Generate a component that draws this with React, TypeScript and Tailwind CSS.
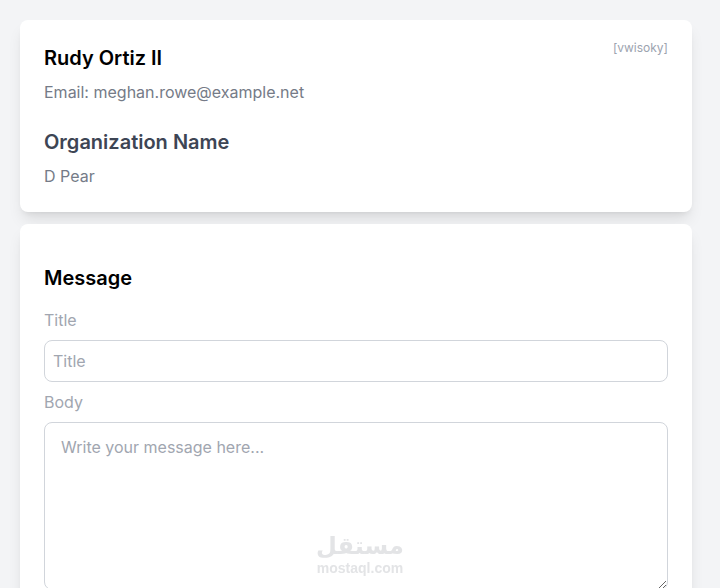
import React from 'react';

const ContactCard = () => {
  return (
    <section className="relative bg-white p-6 rounded-lg shadow-lg">
      <span className="absolute top-5 right-6 text-xs text-[#9ca3af]">[vwisoky]</span>
      <h2 className="text-xl font-semibold text-black mb-2">Rudy Ortiz II</h2>
      <p className="text-[#757b87] mb-6">Email: meghan.rowe@example.net</p>
      <h3 className="text-xl font-semibold text-[#3d4554] mb-2">Organization Name</h3>
      <p className="text-[#757b87]">D Pear</p>
    </section>
  );
};

const MessageForm = () => {
  return (
    <form className="relative bg-white px-6 pt-10 pb-6 rounded-lg shadow-lg">
      <h2 className="text-xl font-semibold text-black mb-4">Message</h2>
      <label htmlFor="title" className="block text-[#a1a6b0] mb-2">
        Title
      </label>
      <input
        id="title"
        type="text"
        placeholder="Title"
        className="block w-full p-2 mb-2 bg-white border border-[#d1d5db] rounded-lg placeholder:text-[#a1a6b0]"
      />
      <label htmlFor="body" className="block text-[#a1a6b0] mb-2">
        Body
      </label>
      <textarea
        id="body"
        placeholder="Write your message here..."
        className="block w-full h-42 px-4 py-3 bg-white border border-[#d1d5db] rounded-lg placeholder:text-[#a1a6b0]"
      />
    </form>
  );
};

const Watermark = () => {
  return (
    <div className="fixed inset-x-0 bottom-3 flex flex-col items-center font-bold text-[#e3e4e6] pointer-events-none">
      <span lang="ar" dir="rtl" className="font-['DejaVu_Sans',sans-serif] text-2xl leading-7">
        مستقل
      </span>
      <span className="font-['Liberation_Sans',sans-serif] text-sm leading-4">mostaql.com</span>
    </div>
  );
};

const App = () => {
  return (
    <main className="min-h-screen bg-[#f3f4f6] font-['Inter',sans-serif] text-base">
      <div className="flex flex-col gap-3 pt-5 pb-5 pl-5 pr-7">
        <ContactCard />
        <MessageForm />
      </div>
      <Watermark />
    </main>
  );
};

export default App;
